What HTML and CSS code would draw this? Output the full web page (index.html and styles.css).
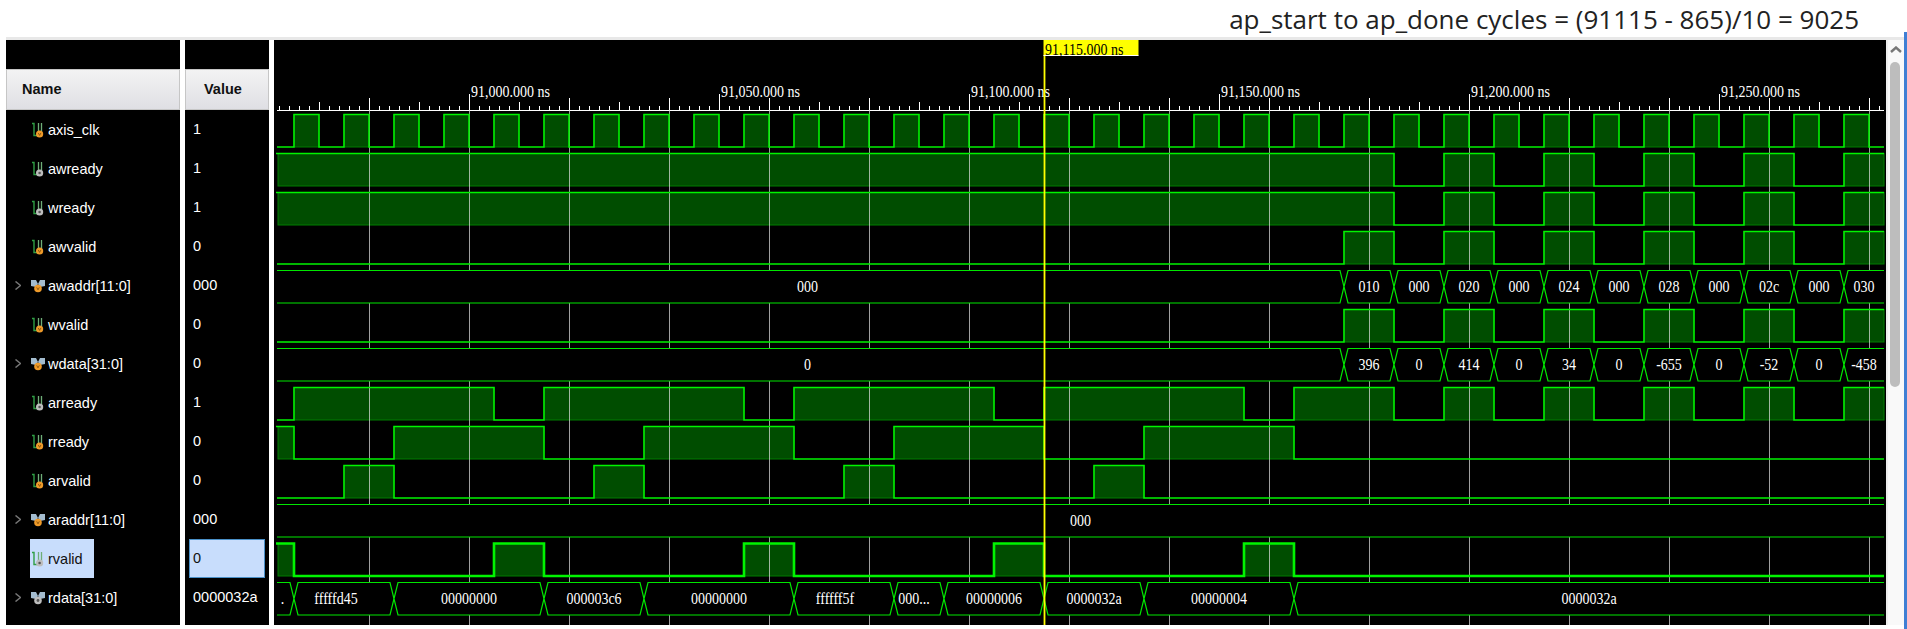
FILE: index.html
```html
<!DOCTYPE html>
<html lang="en">
<head>
  <meta charset="UTF-8" />
  <title>Waveform - ap_start to ap_done</title>
  <link rel="stylesheet" href="styles.css">
</head>
<body>
  <!-- shared icons for the signal list -->
  <svg class="icon-defs" aria-hidden="true">
    <symbol id="scalar-v" viewBox="0 0 14 16">
      <path d="M1 1.5h2V13.5h4" fill="none" stroke="#2f9e44" stroke-width="1.4"/>
      <path d="M7.5 1v9M10.5 1v9" fill="none" stroke="#6fae78" stroke-width="1.3"/>
      <circle cx="8.6" cy="12" r="3.6" fill="#ee9a2a"/>
      <path d="M7.3 11l1.3 2.4 1.3-2.4" fill="none" stroke="#7a4a08" stroke-width=".8"/>
    </symbol>
    <symbol id="scalar-o" viewBox="0 0 14 16">
      <path d="M1 1.5h2V13.5h4" fill="none" stroke="#2f9e44" stroke-width="1.4"/>
      <path d="M7.5 1v9M10.5 1v9" fill="none" stroke="#6fae78" stroke-width="1.3"/>
      <circle cx="8.6" cy="12" r="3.6" fill="#bdbdbd"/>
      <circle cx="8.6" cy="12" r="1.3" fill="#555"/>
    </symbol>
    <symbol id="bus-v" viewBox="0 0 14 16">
      <path d="M0 2h5l2 4-2 3-5-1zM14 2H9L7 6l2 3 5-1z" fill="#a3bccf"/>
      <circle cx="7" cy="10.5" r="3.8" fill="#ee9a2a"/>
      <path d="M5.7 9.4l1.3 2.4 1.3-2.4" fill="none" stroke="#7a4a08" stroke-width=".8"/>
    </symbol>
    <symbol id="bus-o" viewBox="0 0 14 16">
      <path d="M0 2h5l2 4-2 3-5-1zM14 2H9L7 6l2 3 5-1z" fill="#a3bccf"/>
      <circle cx="7" cy="10.5" r="3.8" fill="#bdbdbd"/>
      <circle cx="7" cy="10.5" r="1.4" fill="#555"/>
    </symbol>
    <symbol id="chev" viewBox="0 0 6 9">
      <path d="M.5 .5l5 4-5 4" fill="none" stroke="#777" stroke-width="1.5"/>
    </symbol>
  </svg>

  <div class="page">
    <div class="main">
      <div class="title-bar">ap_start to ap_done cycles = (91115 - 865)/10 = 9025</div>

      <div class="viewer">
        <div class="names">
          <div class="col-head">Name</div>
          <div class="row"><span class="twist"></span><span class="sig"><svg class="icon"><use href="#scalar-v"/></svg>axis_clk</span></div>
          <div class="row"><span class="twist"></span><span class="sig"><svg class="icon"><use href="#scalar-o"/></svg>awready</span></div>
          <div class="row"><span class="twist"></span><span class="sig"><svg class="icon"><use href="#scalar-o"/></svg>wready</span></div>
          <div class="row"><span class="twist"></span><span class="sig"><svg class="icon"><use href="#scalar-v"/></svg>awvalid</span></div>
          <div class="row"><span class="twist"><svg class="chev"><use href="#chev"/></svg></span><span class="sig"><svg class="icon"><use href="#bus-v"/></svg>awaddr[11:0]</span></div>
          <div class="row"><span class="twist"></span><span class="sig"><svg class="icon"><use href="#scalar-v"/></svg>wvalid</span></div>
          <div class="row"><span class="twist"><svg class="chev"><use href="#chev"/></svg></span><span class="sig"><svg class="icon"><use href="#bus-v"/></svg>wdata[31:0]</span></div>
          <div class="row"><span class="twist"></span><span class="sig"><svg class="icon"><use href="#scalar-o"/></svg>arready</span></div>
          <div class="row"><span class="twist"></span><span class="sig"><svg class="icon"><use href="#scalar-v"/></svg>rready</span></div>
          <div class="row"><span class="twist"></span><span class="sig"><svg class="icon"><use href="#scalar-v"/></svg>arvalid</span></div>
          <div class="row"><span class="twist"><svg class="chev"><use href="#chev"/></svg></span><span class="sig"><svg class="icon"><use href="#bus-v"/></svg>araddr[11:0]</span></div>
          <div class="row"><span class="twist"></span><span class="sig selected"><svg class="icon"><use href="#scalar-o"/></svg>rvalid</span></div>
          <div class="row"><span class="twist"><svg class="chev"><use href="#chev"/></svg></span><span class="sig"><svg class="icon"><use href="#bus-o"/></svg>rdata[31:0]</span></div>
        </div>

        <div class="values">
          <div class="col-head col-head-value">Value</div>
          <div class="val">1</div>
          <div class="val">1</div>
          <div class="val">1</div>
          <div class="val">0</div>
          <div class="val">000</div>
          <div class="val">0</div>
          <div class="val">0</div>
          <div class="val">1</div>
          <div class="val">0</div>
          <div class="val">0</div>
          <div class="val">000</div>
          <div class="val selected-val">0</div>
          <div class="val">0000032a</div>
        </div>

        <!-- filled in by wave.js, viewBox uses page coordinates -->
        <svg id="wave" class="wave" viewBox="274 40 1612 585"></svg>

        <div class="scrollbar">
          <svg class="scroll-arrow" viewBox="0 0 12 7"><path d="M1 6l5-4.5 5 4.5" fill="none" stroke="#777" stroke-width="2.4"/></svg>
          <div class="scroll-thumb"></div>
        </div>
      </div>
    </div>
    <div class="edge"></div>
  </div>

  <script src="wave.js"></script>
</body>
</html>
```

FILE: styles.css
```css
* {
  box-sizing: border-box;
  margin: 0;
  padding: 0;
}

html, body {
  height: 629px;
  overflow: hidden;
  background: #fff;
}

body {
  font-family: "Liberation Sans", Arial, sans-serif;
}

.icon-defs {
  display: none;
}

.page {
  display: flex;
  height: 629px;
}

.main {
  flex: 1;
}

/* blue window edge on the far right */
.edge {
  width: 3px;
  margin-top: 32px;
  background: #3f7fd4;
}

.title-bar {
  height: 37px;
  padding: 1px 45px 0 0;
  text-align: right;
  font-family: "Open Sans", sans-serif;
  font-size: 26px;
  line-height: 36px;
  white-space: nowrap;
  color: #222;
}

.viewer {
  display: flex;
  height: 588px;
  margin-left: 6px;
  border-top: 3px solid #e8e8e8;
}

.names {
  width: 174px;
  margin-right: 5px;
  padding-top: 29px;
  background: #000;
}

.values {
  width: 84px;
  margin-right: 5px;
  padding-top: 29px;
  background: #000;
}

.col-head {
  height: 41px;
  padding-left: 15px;
  background: linear-gradient(#f3f3f3, #dfdfe4);
  border: 1px solid #c6c6c6;
  font-size: 14.5px;
  font-weight: bold;
  line-height: 39px;
  color: #111;
}

.col-head-value {
  padding-left: 18px;
}

.row {
  display: flex;
  height: 39px;
  align-items: center;
  padding-left: 9px;
  font-size: 14.5px;
  color: #fff;
}

.twist {
  display: flex;
  width: 15px;
  align-items: center;
}

.chev {
  width: 6px;
  height: 9px;
}

.sig {
  display: flex;
  height: 39px;
  align-items: center;
  gap: 3px;
  padding: 0 11px 0 1px;
}

.sig.selected {
  background: #c8ddfc;
  color: #111;
}

.icon {
  width: 14px;
  height: 16px;
}

.val {
  height: 39px;
  margin: 0 4px;
  padding-left: 3px;
  border: 1px solid transparent;
  font-size: 14.5px;
  line-height: 36px;
  color: #fff;
}

.selected-val {
  background: #c8ddfc;
  border-color: #4a90c8;
  color: #111;
}

.wave {
  display: block;
  width: 1612px;
  height: 585px;
  background: #000;
}

.wave text {
  font-family: "Liberation Serif", "Times New Roman", serif;
  font-size: 14px;
  fill: #fff;
}

.wave .marker-text {
  fill: #000;
}

.scrollbar {
  width: 18px;
  height: 585px;
  padding: 6px 0 0 2px;
  background: #f9f9f9;
  border-left: 2px solid #eee;
}

.scroll-arrow {
  display: block;
  width: 12px;
  height: 7px;
}

.scroll-thumb {
  width: 10px;
  height: 325px;
  margin-top: 9px;
  background: #bdbdbd;
  border-radius: 5px;
}
```

FILE: wave.js
```js
// Waveform drawing, all x values are page pixels (see the viewBox)
const LEFT = 277;
const RIGHT = 1884;
const ROW_PITCH = 39;
const ROW_TOP = 114.5;
const ROW_H = 32.5;

// last part of awready/wready/awvalid/wvalid/arready, one write every 100px
const writes = [[1444, 1494], [1544, 1594], [1644, 1694], [1744, 1794], [1844, RIGHT]];

const clock = [];
for (let x = 294; x < RIGHT; x += 50) clock.push([x, x + 25]);

const writeLabels = (addrs) => addrs.map((v, i) => [1344 + i * 50, v]);

// kind "bit": list of high pulses, kind "bus": [start, label, text shift]
const signals = [
  { highs: clock },
  { highs: [[LEFT, 1394], ...writes] },
  { highs: [[LEFT, 1394], ...writes] },
  { highs: [[1344, 1394], ...writes] },
  { bus: [[LEFT, "000", -3], ...writeLabels(["010", "000", "020", "000", "024", "000", "028", "000", "02c", "000", "030"])] },
  { highs: [[1344, 1394], ...writes] },
  { bus: [[LEFT, "0", -3], ...writeLabels(["396", "0", "414", "0", "34", "0", "-655", "0", "-52", "0", "-458"])] },
  { highs: [[294, 494], [544, 744], [794, 994], [1044, 1244], [1294, 1394], ...writes] },
  { highs: [[LEFT, 294], [394, 544], [644, 794], [894, 1044], [1144, 1294]] },
  { highs: [[344, 394], [594, 644], [844, 894], [1094, 1144]] },
  { bus: [[LEFT, "000"]] },
  { highs: [[LEFT, 294], [494, 544], [744, 794], [994, 1044], [1244, 1294]], thick: true },
  { bus: [
    [LEFT, ".", -3], [294, "fffffd45", -8], [394, "00000000"], [544, "000003c6"], [644, "00000000"],
    [794, "ffffff5f", -9], [894, "000...", -5], [944, "00000006"], [1044, "0000032a"],
    [1144, "00000004"], [1294, "0000032a"]
  ] }
];

// the capture squeezed this font, so the glyphs are taller than 14px text
function label(x, y, str, extra) {
  return `<text transform="translate(${x} ${y}) scale(1 1.2)" ${extra || ""}>${str}</text>`;
}

function drawRuler() {
  let out = `<path d="M${LEFT} 110.5H${RIGHT}" stroke="#fff"/>`;
  for (let x = 279; x < RIGHT; x += 10) {
    let top = 106;
    if ((x - 319) % 50 === 0) top = 102;
    if ((x - 369) % 100 === 0) top = 98;
    if ((x - 469) % 250 === 0) top = 94;
    out += `<path d="M${x + 0.5} ${top}V110" stroke="#fff"/>`;
  }
  ["91,000.000", "91,050.000", "91,100.000", "91,150.000", "91,200.000", "91,250.000"].forEach((t, i) => {
    out += label(471 + i * 250, 96.5, `${t} ns`);
  });
  return out;
}

function drawGrid() {
  let out = "";
  for (let x = 369; x < RIGHT; x += 100) {
    out += `<path d="M${x + 0.5} 110V625" stroke="#e4e4e4" stroke-opacity=".7"/>`;
  }
  return out;
}

function bitFills(sig, top) {
  return sig.highs.map(([a, b]) => {
    const x = Math.max(a, LEFT + 1);
    return `<rect x="${x}" y="${top}" width="${b - x}" height="${ROW_H}" fill="#004d00" stroke="#007c00"/>`;
  }).join("");
}

function bitLine(sig, top) {
  const bot = top + ROW_H;
  const first = sig.highs[0][0];
  let d = first === LEFT ? `M${LEFT - 1} ${top}` : `M${LEFT} ${bot}`;
  sig.highs.forEach(([a, b]) => {
    if (a > LEFT) d += `H${a}V${top}`;
    d += `H${b}`;
    if (b < RIGHT) d += `V${bot}`;
  });
  d += `H${RIGHT}`;
  return `<path d="${d}" fill="none" stroke="#00f400" stroke-width="${sig.thick ? 2.6 : 1.5}"/>`;
}

function drawBus(sig, top) {
  const bot = top + ROW_H;
  const mid = top + ROW_H / 2;
  let out = "";
  sig.bus.forEach(([a, text, shift], i) => {
    const next = sig.bus[i + 1];
    const b = next ? next[0] : RIGHT;
    const start = i === 0 ? `M${a} ${top}` : `M${a} ${mid}L${a + 4} ${top}`;
    const end = next ? `H${b - 4}L${b} ${mid}L${b - 4} ${bot}` : `H${b}V${bot}`;
    const back = i === 0 ? `H${a}` : `H${a + 4}L${a} ${mid}`;
    out += `<path d="${start}${end}${back}" fill="#000" stroke="none"/>`;
    // outline only, the ends of the first and last part stay open
    const openEnd = next ? `H${b - 4}L${b} ${mid}L${b - 4} ${bot}` : `H${b}M${b} ${bot}`;
    const openBack = i === 0 ? `H${a}` : `H${a + 4}L${a} ${mid}`;
    out += `<path d="${start}${openEnd}${openBack}" fill="none" stroke="#00e600" stroke-width="1.2"/>`;
    out += label((a + b) / 2 + (shift || 0), top + 21, text, 'text-anchor="middle"');
  });
  return out;
}

function drawMarker() {
  return `<path d="M1044.5 55V625" stroke="#ff0" stroke-width="1.8"/>` +
    `<rect x="1043.5" y="40" width="95" height="15.5" fill="#ff0"/>` +
    `<path d="M1043.5 55.5H1138.5" stroke="#fff"/>` +
    label(1045, 55, "91,115.000 ns", 'class="marker-text"');
}

let fills = "";
let lines = "";
signals.forEach((sig, i) => {
  const top = ROW_TOP + i * ROW_PITCH;
  if (sig.bus) {
    lines += drawBus(sig, top);
  } else {
    fills += bitFills(sig, top);
    lines += bitLine(sig, top);
  }
});

document.getElementById("wave").innerHTML =
  drawRuler() + fills + drawGrid() + lines + drawMarker();
```
